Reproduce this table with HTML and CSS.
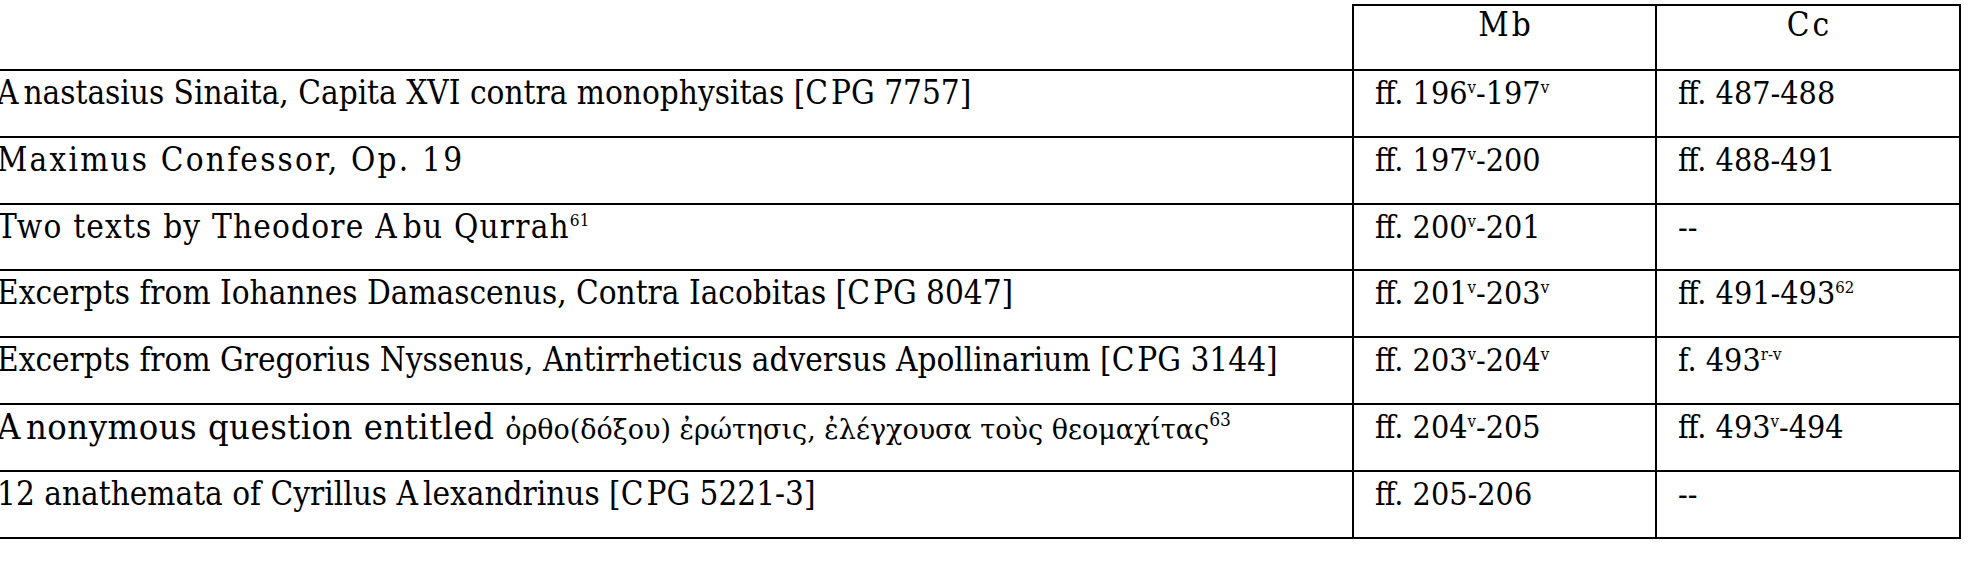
FILE: index.html
```html
<!DOCTYPE html>
<html>
<head>
<meta charset="utf-8">
<link rel="stylesheet" href="styles.css">
</head>
<body>
<table class="mss">
  <colgroup>
    <col class="c-text">
    <col class="c-mb">
    <col class="c-cc">
  </colgroup>
  <thead>
    <tr class="hrow">
      <th class="blank"></th>
      <th class="head"><span class="k">M</span>b</th>
      <th class="head"><span class="k">C</span>c</th>
    </tr>
  </thead>
  <tbody>
    <tr>
      <td class="t r1"><span class="k">A</span>nastasius Sinaita, Capita XVI contra monophysitas [<span class="k2">C</span>PG 7757]</td>
      <td class="n">ff. 196<sup>v</sup>-197<sup>v</sup></td>
      <td class="n">ff. 487-488</td>
    </tr>
    <tr>
      <td class="t r2">Maximus Confessor, Op. 19</td>
      <td class="n">ff. 197<sup>v</sup>-200</td>
      <td class="n">ff. 488-491</td>
    </tr>
    <tr>
      <td class="t r3">Two texts by Theodore <span class="k">A</span>bu Qurrah<sup>61</sup></td>
      <td class="n">ff. 200<sup>v</sup>-201</td>
      <td class="n">--</td>
    </tr>
    <tr>
      <td class="t r4">Excerpts from Iohannes Damascenus, Contra Iacobitas [<span class="k2">C</span>PG 8047]</td>
      <td class="n">ff. 201<sup>v</sup>-203<sup>v</sup></td>
      <td class="n">ff. 491-493<sup>62</sup></td>
    </tr>
    <tr>
      <td class="t r5">Excerpts from Gregorius Nyssenus, Antirrheticus adversus Apollinarium [<span class="k2">C</span>PG 3144]</td>
      <td class="n">ff. 203<sup>v</sup>-204<sup>v</sup></td>
      <td class="n">f. 493<sup>r-v</sup></td>
    </tr>
    <tr>
      <td class="t r6"><span class="wide"><span class="k">A</span>nonymous question entitled </span><span class="gr">ὀρθο(δόξου) ἐρώτησις, ἐλέγχουσα τοὺς θεομαχίτας</span><sup>63</sup></td>
      <td class="n">ff. 204<sup>v</sup>-205</td>
      <td class="n">ff. 493<sup>v</sup>-494</td>
    </tr>
    <tr>
      <td class="t r7">12 anathemata of Cyrillus <span class="k">A</span>lexandrinus [<span class="k2">C</span>PG 5221-3]</td>
      <td class="n">ff. 205-206</td>
      <td class="n">--</td>
    </tr>
  </tbody>
</table>
</body>
</html>
```
FILE: styles.css
```css
html, body {
  margin: 0;
  padding: 0;
  background: #ffffff;
}
body {
  overflow: hidden;
  width: 1970px;
  height: 567px;
}
.mss {
  border-collapse: collapse;
  table-layout: fixed;
  margin: 4px 0 0 -24px;
  font-family: "DejaVu Serif Condensed", "DejaVu Serif", serif;
  font-stretch: condensed;
  font-size: 33px;
  color: #000;
}
.c-text { width: 1377px; }
.c-mb { width: 303px; }
.c-cc { width: 304px; }
.mss tr { height: 66.8px; }
.mss tr.hrow { height: 65px; }
.mss th, .mss td {
  border: 2px solid #000;
  padding: 5px 0 0 21px;
  vertical-align: top;
  text-align: left;
  white-space: nowrap;
  line-height: 34px;
  font-weight: normal;
}
.mss th.blank {
  border-top: none;
  border-left: none;
}
.mss th.head {
  text-align: center;
  padding: 4px 0 0 0;
  font-size: 33px;
  line-height: 30px;
}
.mss td:first-child {
  border-left: none;
}
.mss td.n { font-size: 32px; }
.r2 { letter-spacing: 2.2px; }
.r3 { letter-spacing: 1.2px; }
.wide {
  font-size: 36px;
  letter-spacing: 0.5px;
}
.k { margin-right: 5px; }
.k2 { margin-right: 3px; }
.head .k { margin-right: 3px; }
.gr {
  font-family: "DejaVu Serif", serif;
  font-stretch: normal;
  font-size: 27px;
  letter-spacing: 0;
}
sup {
  font-size: 52%;
  line-height: 0;
  vertical-align: 0.68em;
  letter-spacing: 0;
}
.wide + .gr + sup { font-size: 19px; }
```
